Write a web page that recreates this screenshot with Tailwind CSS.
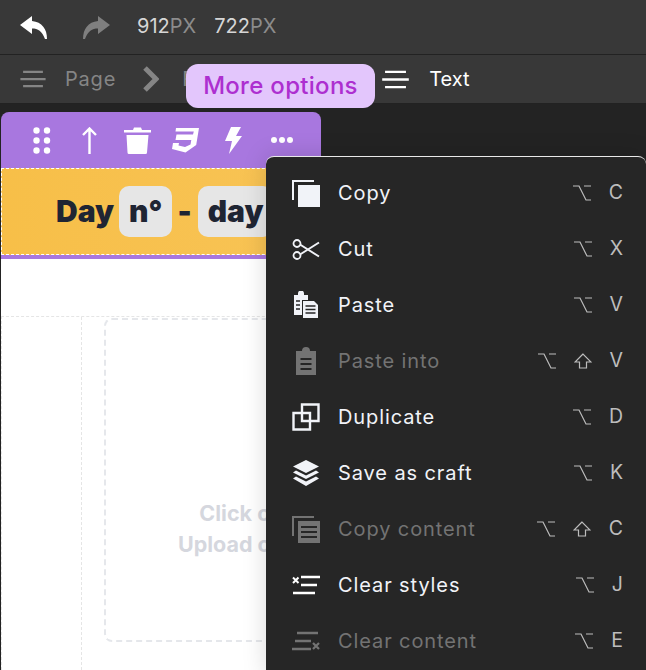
<!DOCTYPE html>
<html lang="en">
<head>
    <meta charset="UTF-8">
    <meta name="viewport" content="width=device-width, initial-scale=1.0">
    <title>Editor</title>
    <script src="https://cdn.jsdelivr.net/npm/@tailwindcss/browser@4"></script>
</head>
<body class="bg-[#232323] font-['Inter',sans-serif]">
<svg class="hidden">
    <symbol id="opt" viewBox="0 0 18 16"><path d="M0 1h6l7 14h5M11 1h7" fill="none" stroke="currentColor" stroke-width="1.2"/></symbol>
    <symbol id="shift" viewBox="0 0 18 16"><path d="M9 1 1 9h4.500v6h7V9H17z" fill="none" stroke="currentColor" stroke-width="1.2"/></symbol>
    <symbol id="bars" viewBox="0 0 28 20"><path d="M3 2h22M0 10h28M3 18h22" fill="none" stroke="currentColor" stroke-width="2.500"/></symbol>
    <symbol id="reply" viewBox="0 0 27 23"><path d="M12 0 0 9l12 9v-5.500c6 0 10 2.500 13 10.500h2c0-10-5-17-15-18z" fill="currentColor"/></symbol>
</svg>

<div class="relative h-[670px] w-[646px] overflow-hidden flex flex-col">
    <!-- Top bar -->
    <div class="h-[55px] shrink-0 bg-[#383838] border-b border-[#222] flex items-center text-[20px] text-[#d6d6d6]">
        <svg class="ml-[20px] w-[27px] h-[23px] text-white"><use href="#reply"/></svg>
        <svg class="ml-[36px] w-[27px] h-[23px] -scale-x-100 text-[#7f7f7f]"><use href="#reply"/></svg>
        <span class="ml-[27px] mb-[3px]">912<span class="text-[#8c8c8c]">PX</span></span>
        <span class="ml-[18px] mb-[3px]">722<span class="text-[#8c8c8c]">PX</span></span>
    </div>
    <!-- Breadcrumb -->
    <div class="h-[49px] shrink-0 bg-[#383838] border-b border-[#222] flex items-center text-[20px]">
        <svg class="ml-[20px] w-[26px] h-[18px] text-[#858585]"><use href="#bars"/></svg>
        <span class="ml-[19px] tracking-[0.8px] text-[#858585]">Page</span>
        <svg class="ml-[26px] w-[17px] h-[26px] text-[#858585]" viewBox="0 0 17 26"><path d="M3 2l11 11L3 24" fill="none" stroke="currentColor" stroke-width="5"/></svg>
        <span class="ml-[23px] w-[200px] text-[#858585]">Row</span>
        <svg class="w-[27px] h-[19px] text-white"><use href="#bars"/></svg>
        <span class="ml-[20px] text-white">Text</span>
    </div>

    <!-- Canvas -->
    <div class="flex-1 pt-2 pl-px flex flex-col min-h-0">
        <div class="h-[56px] w-[320px] shrink-0 rounded-t-lg bg-[#a877df] flex items-center text-white">
            <svg class="ml-[32px] w-[18px] h-[27px]" viewBox="0 0 18 27" fill="currentColor"><circle cx="3.500" cy="3.500" r="3.200"/><circle cx="14" cy="3.500" r="3.200"/><circle cx="3.500" cy="13.500" r="3.200"/><circle cx="14" cy="13.500" r="3.200"/><circle cx="3.500" cy="23.500" r="3.200"/><circle cx="14" cy="23.500" r="3.200"/></svg>
            <svg class="ml-[31px] w-[15px] h-[27px]" viewBox="0 0 15 27"><path d="M7.500 27V2M1 8l6.500-6.500L14 8" fill="none" stroke="currentColor" stroke-width="2.400"/></svg>
            <svg class="ml-[27px] w-[27px] h-[27px]" viewBox="0 0 27 27" fill="currentColor"><path d="M0 3h9l1-2.500h7L18 3h9v2.500H0zM2.500 8h22l-1.500 17.500a1.500 1.500 0 0 1-1.500 1.500h-16.500a1.500 1.500 0 0 1-1.500-1.500z"/></svg>
            <svg class="ml-[21px] w-[27px] h-[26px]" viewBox="0 0 27 26" fill="currentColor"><path d="M4 1h23l-2.800 17-10.700 7.500L0 22l1-6h6l-.5 2.500 6.500 1.500 5.500-2.500.8-4.500H3.500l1-5.500h16.500l.8-3H3.500z"/></svg>
            <svg class="ml-[26px] w-[17px] h-[27px]" viewBox="0 0 17 27" fill="currentColor"><path d="M6 0h10l-5 9h6L4 27l3-13H0z"/></svg>
            <svg class="ml-[29px] w-[22px] h-[6px]" viewBox="0 0 22 6" fill="currentColor"><circle cx="3" cy="3" r="3"/><circle cx="11" cy="3" r="3"/><circle cx="19" cy="3" r="3"/></svg>
        </div>
        <div class="flex-1 bg-white flex flex-col min-h-0">
            <div class="h-[91px] shrink-0 border-b-4 border-[#a877df]">
                <div class="h-[87px] border border-dashed border-white bg-gradient-to-r from-[#f7bf48] to-[#f9c862] flex items-center pl-[54px] text-[30px] font-black text-[#1f2533]">
                    <span>Day</span>
                    <span class="ml-[5px] h-[51px] px-[10px] rounded-[10px] bg-[#e6e6e6] flex items-center">n°</span>
                    <span class="ml-[5px]">-</span>
                    <span class="ml-[6px] h-[51px] px-[10px] rounded-[10px] bg-[#e6e6e6] flex items-center">day</span>
                </div>
            </div>
            <div class="mt-[57px] flex-1 border-t border-l border-dashed border-[#e5e5e5] flex min-h-0">
                <div class="w-[80px] shrink-0 border-r border-dashed border-[#e5e5e5]"></div>
                <div class="ml-[22px] mt-px w-[450px] h-[324px] border-2 border-dashed border-[#e5e7eb] rounded-lg pt-[178px] text-center text-[21.5px] leading-[31px] font-bold text-[#d5d7de]">
                    <p class="pr-[4px]">Click or drag your image</p>
                    <p class="pr-[10px]">Upload or choose a file here</p>
                </div>
            </div>
        </div>
    </div>

    <!-- Tooltip -->
    <div class="absolute left-[186px] top-[64px] w-[189px] h-[44px] rounded-xl bg-[#e3c6fc] text-[#ad2fd0] text-[24px] tracking-[0.3px] font-medium flex items-center justify-center">More options</div>

    <!-- Context menu -->
    <div class="absolute left-[266px] top-[156px] w-[380px] h-[520px] rounded-t-lg bg-[#262626] border-t border-white/90 pt-2 shadow-[0_0_24px_rgba(0,0,0,0.15)] text-[20px] tracking-[0.9px] text-[#f1f3f8]">
        <div class="h-[56px] pl-[26px] pr-[23px] flex items-center">
            <svg class="w-[28px] h-[28px]" viewBox="0 0 28 28"><path d="M1 21V2h21" fill="none" stroke="currentColor" stroke-width="2"/><rect x="6" y="6" width="22" height="22" fill="currentColor"/></svg>
            <span class="ml-[18px] flex-1">Copy</span>
            <span class="flex items-center gap-[18px] tracking-normal text-[#bdbdbd] text-[19.5px]"><svg class="w-[18px] h-[16px]"><use href="#opt"/></svg>C</span>
        </div>
        <div class="h-[56px] pl-[26px] pr-[23px] flex items-center">
            <svg class="w-[28px] h-[21px]" viewBox="0 0 28 21"><path d="M8 5.500 27 17.500M8 15.500 27 3.500" fill="none" stroke="currentColor" stroke-width="2"/><circle cx="5" cy="4.500" r="3.500" fill="none" stroke="currentColor" stroke-width="1.800"/><circle cx="5" cy="16.500" r="3.500" fill="none" stroke="currentColor" stroke-width="1.800"/></svg>
            <span class="ml-[18px] flex-1">Cut</span>
            <span class="flex items-center gap-[18px] tracking-normal text-[#bdbdbd] text-[19.5px]"><svg class="w-[18px] h-[16px]"><use href="#opt"/></svg>X</span>
        </div>
        <div class="h-[56px] pl-[26px] pr-[23px] flex items-center">
            <svg class="w-[28px] h-[28px]" viewBox="0 0 28 28"><path d="M2 4h4V2.500a2.500 2.500 0 0 1 6 0V4h4v5h-6v15H2z" fill="currentColor"/><path d="M4 10h4M4 14h4M4 18h4" stroke="#262626" stroke-width="1.500"/><path d="M11 10h11l4 4v13H11z" fill="currentColor"/><path d="M13.500 15h10M13.500 18.500h10M13.500 22h10" stroke="#262626" stroke-width="1.500"/></svg>
            <span class="ml-[18px] flex-1">Paste</span>
            <span class="flex items-center gap-[18px] tracking-normal text-[#bdbdbd] text-[19.5px]"><svg class="w-[18px] h-[16px]"><use href="#opt"/></svg>V</span>
        </div>
        <div class="h-[56px] pl-[26px] pr-[23px] flex items-center">
            <svg class="w-[28px] h-[28px] text-[#737373]" viewBox="0 0 28 28"><path d="M4 4h6a4 4 0 0 1 8 0h6v24H4z" fill="currentColor"/><path d="M8.500 12h11M8.500 17h11M8.500 22h11" stroke="#262626" stroke-width="2"/></svg>
            <span class="ml-[18px] flex-1 text-[#737373]">Paste into</span>
            <span class="flex items-center gap-[18px] tracking-normal text-[#bdbdbd] text-[19.5px]"><svg class="w-[18px] h-[16px]"><use href="#opt"/></svg><svg class="w-[18px] h-[16px]"><use href="#shift"/></svg>V</span>
        </div>
        <div class="h-[56px] pl-[26px] pr-[23px] flex items-center">
            <svg class="w-[28px] h-[28px]" viewBox="0 0 28 28"><path d="M10 1.500h16.500V18H10zM1.500 10H18v16.500H1.500z" fill="none" stroke="currentColor" stroke-width="2.400"/></svg>
            <span class="ml-[18px] flex-1">Duplicate</span>
            <span class="flex items-center gap-[18px] tracking-normal text-[#bdbdbd] text-[19.5px]"><svg class="w-[18px] h-[16px]"><use href="#opt"/></svg>D</span>
        </div>
        <div class="h-[56px] pl-[26px] pr-[23px] flex items-center">
            <svg class="w-[28px] h-[28px]" viewBox="0 0 28 28" fill="currentColor"><path d="M14 1l13 6.500L14 14 1 7.500z"/><path d="M4 11.500l10 5 10-5 3 2L14 20 1 13.500z"/><path d="M4 17.500l10 5 10-5 3 2L14 27 1 19.500z"/></svg>
            <span class="ml-[18px] flex-1">Save as craft</span>
            <span class="flex items-center gap-[18px] tracking-normal text-[#bdbdbd] text-[19.5px]"><svg class="w-[18px] h-[16px]"><use href="#opt"/></svg>K</span>
        </div>
        <div class="h-[56px] pl-[26px] pr-[23px] flex items-center">
            <svg class="w-[28px] h-[28px] text-[#737373]" viewBox="0 0 28 28"><path d="M1 21V2h21" fill="none" stroke="currentColor" stroke-width="2"/><rect x="6" y="6" width="22" height="22" fill="currentColor"/><path d="M9 12h16M9 17h16M9 22h16" stroke="#262626" stroke-width="2"/></svg>
            <span class="ml-[18px] flex-1 text-[#737373]">Copy content</span>
            <span class="flex items-center gap-[18px] tracking-normal text-[#bdbdbd] text-[19.5px]"><svg class="w-[18px] h-[16px]"><use href="#opt"/></svg><svg class="w-[18px] h-[16px]"><use href="#shift"/></svg>C</span>
        </div>
        <div class="h-[56px] pl-[26px] pr-[23px] flex items-center">
            <svg class="w-[28px] h-[20px] text-white" viewBox="0 0 28 20"><path d="M1 2.500l5.500 5.500M6.500 2.500 1 8" fill="none" stroke="currentColor" stroke-width="2"/><path d="M9 2h19M9 10h16M1 18h22" fill="none" stroke="currentColor" stroke-width="2.400"/></svg>
            <span class="ml-[18px] flex-1">Clear styles</span>
            <span class="flex items-center gap-[18px] tracking-normal text-[#bdbdbd] text-[19.5px]"><svg class="w-[18px] h-[16px]"><use href="#opt"/></svg>J</span>
        </div>
        <div class="h-[56px] pl-[26px] pr-[23px] flex items-center">
            <svg class="w-[28px] h-[20px] text-[#737373]" viewBox="0 0 28 20"><path d="M5 2h21M3 10h16M0 18h19" fill="none" stroke="currentColor" stroke-width="2.400"/><path d="M21 12l6 6M27 12l-6 6" fill="none" stroke="currentColor" stroke-width="2.200"/></svg>
            <span class="ml-[18px] flex-1 text-[#737373]">Clear content</span>
            <span class="flex items-center gap-[18px] tracking-normal text-[#bdbdbd] text-[19.5px]"><svg class="w-[18px] h-[16px]"><use href="#opt"/></svg>E</span>
        </div>
    </div>
</div>
</body>
</html>
